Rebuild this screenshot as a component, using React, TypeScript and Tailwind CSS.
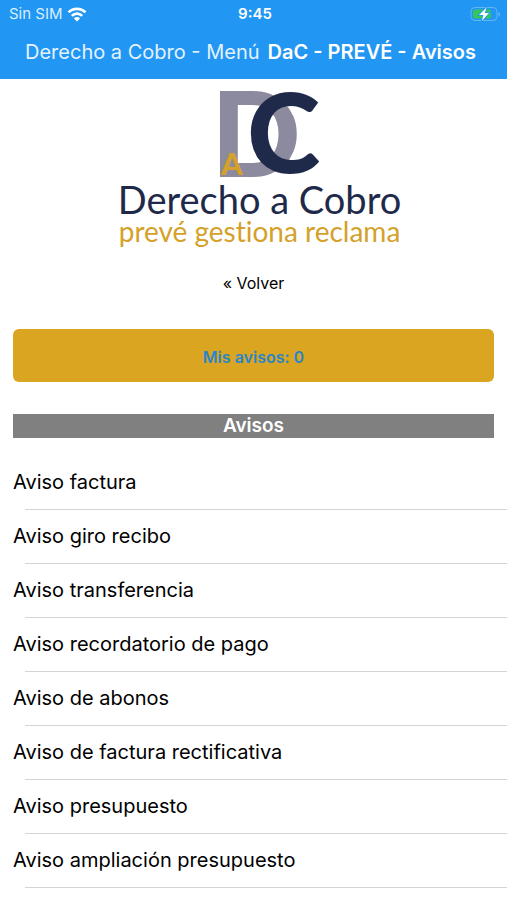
const avisos = [
  "Aviso factura",
  "Aviso giro recibo",
  "Aviso transferencia",
  "Aviso recordatorio de pago",
  "Aviso de abonos",
  "Aviso de factura rectificativa",
  "Aviso presupuesto",
  "Aviso ampliación presupuesto",
];

function WifiIcon() {
  return (
    <svg viewBox="0 0 20 15" className="w-5 h-[15px]" fill="none" stroke="currentColor" strokeWidth="2.6" aria-hidden="true">
      <path d="M1.5 5.4a12 12 0 0 1 17 0" />
      <path d="M4.8 8.8a7.4 7.4 0 0 1 10.4 0" />
      <path d="M10 14.4L6.9 11.4a4.4 4.4 0 0 1 6.2 0z" fill="currentColor" stroke="none" />
    </svg>
  );
}

function BatteryIcon() {
  return (
    <svg viewBox="0 0 31 16" className="w-[31px] h-4" aria-hidden="true">
      <rect x="1" y="1.5" width="26" height="13" rx="4" fill="none" stroke="#64b5f6" />
      <path d="M28.5 6v4.5q1.5-.6 1.5-2.25t-1.5-2.25z" fill="#64b5f6" />
      <rect x="3" y="3.5" width="18" height="9" rx="2" fill="#35c759" />
      <path d="M16.5 1.5L9 9h4.400l-1.600 6L19 7h-4.200z" fill="#fff" stroke="#2196f3" strokeWidth="1.6" paintOrder="stroke" />
    </svg>
  );
}

function StatusBar() {
  return (
    <div className="grid grid-cols-3 items-center h-7 pl-[9px] pr-1.5">
      <div className="flex items-center gap-1 text-[15px] text-[#d9efff]">
        <span>Sin SIM</span>
        <span className="text-white"><WifiIcon /></span>
      </div>
      <span className="text-center text-[15px] font-semibold">9:45</span>
      <div className="flex justify-end">
        <BatteryIcon />
      </div>
    </div>
  );
}

function Logo() {
  return (
    <div className="font-[Lato,sans-serif] text-center whitespace-nowrap [font-variant-ligatures:none]">
      <svg viewBox="0 0 110 96" className="block w-[110px] h-24 mx-auto overflow-visible" role="img" aria-label="DaC">
        <text x="12" y="94" fontSize="118" fontWeight="900" fill="#8b8a9f">D</text>
        <text x="48" y="90" fontSize="111" fontWeight="900" fill="#1f2a4a">C</text>
        <text x="22" y="92" fontSize="31" fontWeight="900" fill="#d4a12a">A</text>
      </svg>
      <p className="mt-0.5 pl-3 text-[38px] leading-9 text-[#1f2a4a]">Derecho a Cobro</p>
      <p className="pl-3 text-[28px] leading-7 text-[#d4a12a]">prevé gestiona reclama</p>
    </div>
  );
}

export default function App() {
  return (
    <div className="min-h-screen bg-white text-black font-[Inter,sans-serif]">
      <header className="bg-[#2196f3] text-white h-[79px]">
        <StatusBar />
        <nav className="flex justify-center items-center gap-2 h-12 pr-1.5 text-[20px] whitespace-nowrap">
          <a href="#menu" className="text-[#e3f3ff]">Derecho a Cobro - Menú</a>
          <h1 className="font-semibold">DaC - PREVÉ - Avisos</h1>
        </nav>
      </header>
      <main className="pt-1">
        <Logo />
        <div className="px-[13px]">
          <a href="#volver" className="block w-fit mx-auto mt-7 text-[16px] leading-5">« Volver</a>
          <button type="button" className="block w-full h-[53px] pt-0.5 mt-9 rounded-md bg-[#daa520] text-[#2a86c8] text-[16px] font-semibold">
            Mis avisos: 0
          </button>
          <h2 className="mt-8 bg-[#808080] text-white text-center text-[19px] leading-6 font-semibold">Avisos</h2>
        </div>
        <ul className="mt-[18px]">
          {avisos.map((aviso) => (
            <li key={aviso}>
              <a href="#aviso" className="block pl-[13px] h-[53px] leading-[53px] text-[20px]">{aviso}</a>
              <div className="ml-[25px] h-px bg-[#d4d4d6]"></div>
            </li>
          ))}
        </ul>
      </main>
    </div>
  );
}
